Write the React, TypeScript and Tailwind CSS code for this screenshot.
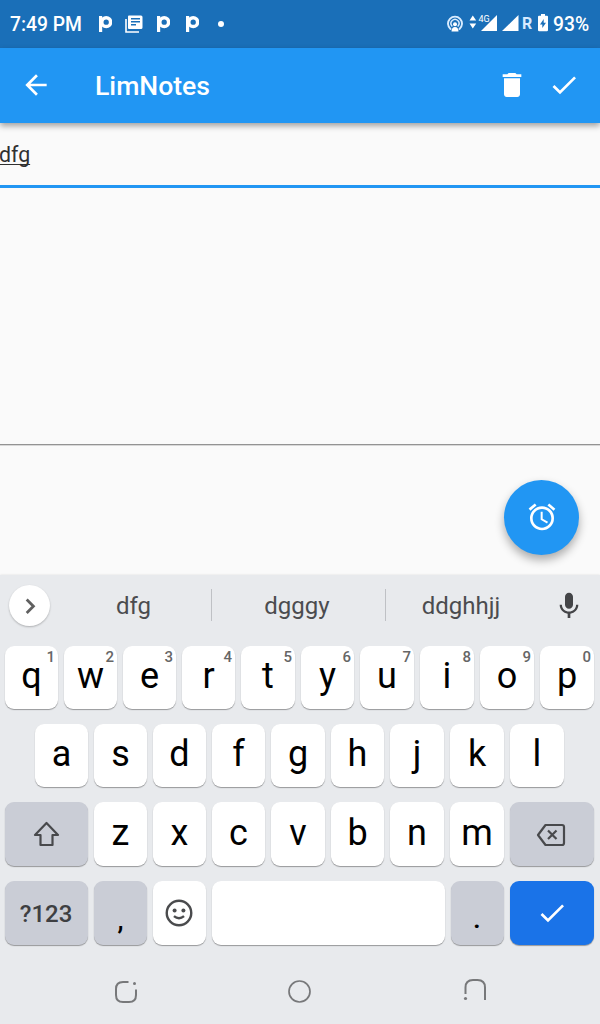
import type { ReactNode } from 'react';

function Key({ tone = 'light', children, hint }: { tone?: 'light' | 'dark' | 'blue'; children?: ReactNode; hint?: string }) {
  const bg = tone === 'light' ? 'bg-white' : tone === 'dark' ? 'bg-[#cacdd6]' : 'bg-[#1a73e8]';
  return (
    <div className={`relative flex min-h-0 justify-center rounded-[9px] text-black shadow-[0_1px_1px_rgba(0,0,0,0.35)] ${bg}`}>
      {children}
      {hint && <span className="absolute right-[3px] top-[2px] text-[15px] font-medium leading-[18px] text-[#666]">{hint}</span>}
    </div>
  );
}

function Letter({ char }: { char: string }) {
  return <span className="text-[36px] leading-[60px]">{char}</span>;
}

function PLogo() {
  return (
    <svg className="h-[18px] w-[14px]" viewBox="0 0 14 18">
      <path d="M2.600 1v16" stroke="#fff" strokeWidth="3.200" />
      <circle cx="8.200" cy="7.200" r="4.400" fill="none" stroke="#fff" strokeWidth="3.500" />
    </svg>
  );
}

function StatusBar() {
  return (
    <header className="flex h-12 items-center bg-[#1a6fb8] pl-[10px] text-white">
      <span className="w-[87px] whitespace-nowrap pt-[3px] text-[19.300px] font-medium">7:49 PM</span>
      <div className="ml-[1px] flex w-[133px] items-center">
        <PLogo />
        <svg className="ml-[13px] h-[18px] w-[18px]" viewBox="0 0 18 18">
          <path d="M1 4v13h13" fill="none" stroke="#fff" strokeWidth="1.600" />
          <path fillRule="evenodd" fill="#fff" d="M4 .5h12q1.500 0 1.500 1.500v10.500q0 1.500-1.500 1.500H4q-1 0-1-1V1.500q0-1 1-1ZM6 3v1.500h9V3Zm0 3v1.500h9V6Zm0 3v1.500h5V9Z" />
        </svg>
        <span className="ml-[13px] flex"><PLogo /></span>
        <span className="ml-[15px] flex"><PLogo /></span>
        <span className="ml-[19px] h-[6px] w-[6px] shrink-0 rounded-full bg-white" />
      </div>
      <svg className="ml-[216px] h-[18px] w-[16px] shrink-0" viewBox="0 0 16 18">
        <g fill="none" stroke="#d9ecff" strokeLinecap="round">
          <path d="M3.500 14A7 7 0 1 1 12.500 14" strokeWidth="1.900" />
          <path d="M4.900 11A4 4 0 1 1 11.100 11" strokeWidth="1.500" />
        </g>
        <circle cx="8" cy="9.200" r="2" fill="#fff" />
        <path d="M4.500 16.500q0-4.500 3.500-4.500t3.500 4.500Z" fill="#fff" />
      </svg>
      <svg className="ml-[6px] h-[20px] w-[28px] shrink-0" viewBox="0 0 28 20">
        <path fill="#fff" d="M.500 6.500 3.800 1.500 7.200 6.500ZM.500 9.500h6.700l-3.400 5ZM28 1v16H12Z" />
        <text x="9.500" y="8" fontSize="9" fill="#fff" className="font-[Roboto]">4G</text>
      </svg>
      <svg className="ml-[5px] h-[20px] w-[17px] shrink-0" viewBox="0 0 17 20">
        <path fill="#fff" d="M16.500 1v16H0Z" />
      </svg>
      <span className="ml-[3px] w-[11px] text-[16px] font-bold text-[#d6eaff]">R</span>
      <svg className="mb-[2px] ml-[5px] h-[18px] w-[10px] shrink-0" viewBox="0 0 10 18">
        <path fill="#fff" fillRule="evenodd" d="M3 0h4v1.800h2q1 0 1 1V16q0 1.200-1.200 1.200H1.200Q0 17.200 0 16V2.800q0-1 1-1h2ZM5.700 5 2 10.500h2.300V14L8 8.800H5.700Z" />
      </svg>
      <span className="ml-[5px] whitespace-nowrap pt-[3px] text-[19.300px] font-medium">93%</span>
    </header>
  );
}

function AppBar() {
  return (
    <div className="z-10 flex h-[75px] items-center bg-[#2196f3] pl-5 pr-5 text-white shadow-[0_3px_6px_rgba(0,0,0,0.36)]">
      <svg className="mb-px h-8 w-8" viewBox="0 0 24 24" fill="currentColor"><path d="M20 11H7.830l5.590-5.590L12 4l-8 8 8 8 1.410-1.410L7.830 13H20v-2z" /></svg>
      <h1 className="ml-[43px] text-[26.600px] font-medium leading-8">LimNotes</h1>
      <svg className="mb-px ml-auto h-8 w-8" viewBox="0 0 24 24" fill="currentColor"><path d="M6 19c0 1.100.9 2 2 2h8c1.100 0 2-.9 2-2V7H6v12zM19 4h-3.500l-1-1h-5l-1 1H5v2h14V4z" /></svg>
      <svg className="mb-px ml-5 h-8 w-8" viewBox="0 0 24 24" fill="currentColor"><path d="M9 16.170 4.830 12l-1.420 1.410L9 19 21 7l-1.410-1.410z" /></svg>
    </div>
  );
}

function Keyboard() {
  return (
    <section className="z-10 flex h-[449px] flex-col bg-[#e8eaed] shadow-[0_0_2px_rgba(0,0,0,0.12)]">
      <div className="flex h-[61px] items-center text-[24px] text-[#4b4c4f]">
        <div className="ml-[9px] flex h-[41px] w-[41px] items-center justify-center rounded-full bg-white shadow-[0_1px_2px_rgba(0,0,0,0.25)]">
          <svg className="h-6 w-6" viewBox="0 0 24 24" fill="none" stroke="#606060" strokeWidth="2.800"><path d="m8.700 5.500 6.700 6.700-6.700 6.700" /></svg>
        </div>
        <span className="ml-[6px] w-[155px] text-center">dfg</span>
        <i className="mb-[2px] h-8 w-px bg-[#bfc1c5]" />
        <span className="w-[170px] text-center">dgggy</span>
        <i className="mb-[2px] ml-[3px] h-8 w-px bg-[#bfc1c5]" />
        <span className="w-[150px] text-center">ddghhjj</span>
        <svg className="ml-[17px] h-8 w-8" viewBox="0 0 24 24" fill="#444548"><path d="M12 14c1.660 0 3-1.340 3-3V5c0-1.660-1.340-3-3-3S9 3.340 9 5v6c0 1.660 1.340 3 3 3zm5.300-3c0 3-2.540 5.100-5.300 5.100S6.700 14 6.700 11H5c0 3.410 2.720 6.230 6 6.720V21h2v-3.280c3.280-.48 6-3.300 6-6.720h-1.700z" /></svg>
      </div>
      <div className="mt-[10px] grid h-[63px] grid-cols-[53px_53px_53px_53px_54px_53px_54px_54px_54px_54px] grid-rows-[63px] gap-1.5 pl-[5px]">
        {[...'qwertyuiop'].map((c, i) => <Key key={c} hint={'1234567890'[i]}><Letter char={c} /></Key>)}
      </div>
      <div className="mt-[15px] grid h-[63px] grid-cols-[53px_53px_53px_53px_54px_53px_54px_54px_54px] grid-rows-[63px] gap-1.5 pl-[35px]">
        {[...'asdfghjkl'].map((c) => <Key key={c}><Letter char={c} /></Key>)}
      </div>
      <div className="mt-[15px] grid h-16 grid-cols-[83px_53px_53px_53px_54px_53px_54px_54px_84px] grid-rows-[64px] gap-1.5 pl-[5px]">
        <Key tone="dark">
          <svg className="mt-[18px] h-7 w-8" viewBox="0 0 32 28" fill="none" stroke="#48494c" strokeWidth="2.200" strokeLinejoin="round"><path d="M15.500 3 4 15H9.500v10h12v-10H27Z" /></svg>
        </Key>
        {[...'zxcvbnm'].map((c) => <Key key={c}><span className="flex pt-px"><Letter char={c} /></span></Key>)}
        <Key tone="dark">
          <svg className="mr-[2px] mt-[20px] h-[26px] w-8" viewBox="0 0 32 26" fill="none" stroke="#48494c" strokeWidth="2.200" strokeLinejoin="round"><path d="M10.500 3H27q2 0 2 2v16q0 2-2 2H10.500L3 13ZM13 8.500l8.500 8.500m0-8.500L13 17" /></svg>
        </Key>
      </div>
      <div className="mt-[15px] grid h-16 grid-cols-[83px_53px_53px_233px_53px_84px] grid-rows-[64px] gap-1.5 pl-[5px]">
        <Key tone="dark"><span className="mr-px text-[24px] font-medium leading-[67px] text-[#3e3f42]">?123</span></Key>
        <Key tone="dark"><span className="pt-[3px] text-[27px] font-medium leading-[72px]">,</span></Key>
        <Key>
          <svg className="mr-px mt-4 h-8 w-8" viewBox="0 0 24 24" fill="none" stroke="#4a4b4d" strokeWidth="1.800"><circle cx="12" cy="12" r="9.200" /><circle cx="8.700" cy="10.200" r="1.500" fill="#4a4b4d" stroke="none" /><circle cx="15.300" cy="10.200" r="1.500" fill="#4a4b4d" stroke="none" /><path d="M8.200 14.300q3.800 3.200 7.600 0" /></svg>
        </Key>
        <Key />
        <Key tone="dark"><span className="mr-px pt-[2px] text-[28px] font-medium leading-[72px]">.</span></Key>
        <Key tone="blue">
          <svg className="mt-4 h-8 w-8" viewBox="0 0 24 24" fill="#fff"><path d="M9 16.170 4.830 12l-1.420 1.410L9 19 21 7l-1.410-1.410z" /></svg>
        </Key>
      </div>
      <nav className="flex h-[79px] items-center pl-[112px] pt-[15px]">
        <svg className="h-7 w-7" viewBox="0 0 28 28" fill="none" stroke="#77787a" strokeWidth="2"><path d="M16.500 4H11q-7 0-7 7v6q0 7 7 7h6q7 0 7-7v-5.500" /><circle cx="22.500" cy="5.500" r="1.500" fill="#77787a" stroke="none" /></svg>
        <svg className="ml-[146px] h-7 w-7" viewBox="0 0 28 28" fill="none" stroke="#77787a" strokeWidth="1.700"><circle cx="13.500" cy="13.500" r="10.500" /></svg>
        <svg className="ml-[147px] h-7 w-7" viewBox="0 0 28 28" fill="none" stroke="#77787a" strokeWidth="2"><path d="M4.500 16V9.500Q4.500 2 12 2h4.500Q24 2 24 9.500V22" /><circle cx="4.500" cy="20.500" r="1.600" fill="#77787a" stroke="none" /></svg>
      </nav>
    </section>
  );
}

export default function App() {
  return (
    <div className="flex h-[1024px] w-[600px] flex-col overflow-hidden bg-[#fafafa] font-[Roboto,sans-serif]">
      <StatusBar />
      <AppBar />
      <main className="relative flex h-[452px] flex-col">
        <div className="flex h-[65px] border-b-[3px] border-[#2196f3] pt-[18px] text-[21.300px] leading-[27px] text-[#303030]">
          <span className="-ml-px underline decoration-1 underline-offset-[2px] [text-decoration-skip-ink:none]">dfg</span>
        </div>
        <div className="h-[257px] border-b border-[#939393] shadow-[0_1px_0_#d8d8d8]" />
        <button className="absolute left-[504px] top-[357px] flex h-[75px] w-[75px] items-center justify-center rounded-full bg-[#2196f3] shadow-[0_5px_10px_rgba(0,0,0,0.32)]">
          <svg className="mb-px h-8 w-8" viewBox="0 0 24 24" fill="#fff"><path d="m22 5.720-4.600-3.860-1.290 1.530 4.600 3.860L22 5.720zM7.880 3.390 6.600 1.860 2 5.710l1.290 1.530 4.590-3.850zM12.500 8H11v6l4.750 2.850.75-1.230-4-2.370V8zM12 4c-4.970 0-9 4.030-9 9s4.020 9 9 9a9 9 0 0 0 0-18zm0 16c-3.870 0-7-3.130-7-7s3.130-7 7-7 7 3.130 7 7-3.130 7-7 7z" /></svg>
        </button>
      </main>
      <Keyboard />
    </div>
  );
}
